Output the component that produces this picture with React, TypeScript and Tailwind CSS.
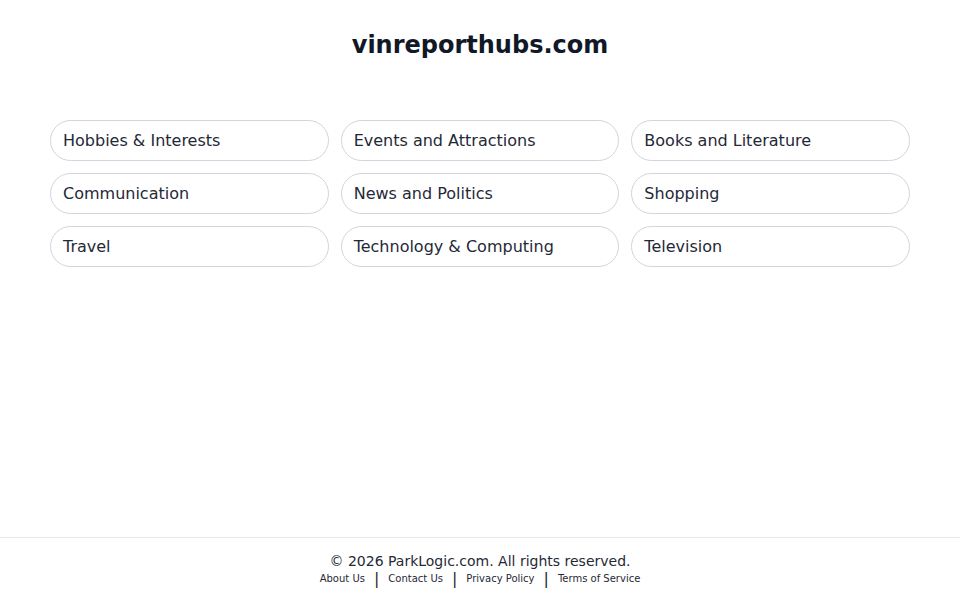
import React from "react";

const topics = [
  "Hobbies & Interests",
  "Events and Attractions",
  "Books and Literature",
  "Communication",
  "News and Politics",
  "Shopping",
  "Travel",
  "Technology & Computing",
  "Television",
];

const links = ["About Us", "Contact Us", "Privacy Policy", "Terms of Service"];

const App = () => {
  return (
    <div
      className="flex min-h-screen flex-col bg-white text-[#111827]"
      style={{ fontFamily: '"DejaVu Sans", sans-serif' }}
    >
      <main className="flex-1">
        <h1 className="pt-[30px] text-center text-[24px] font-bold leading-[30px]">
          vinreporthubs.com
        </h1>
        <div className="mx-[50px] mt-[60px] grid grid-cols-3 gap-x-3 gap-y-3">
          {topics.map((t) => (
            <a
              key={t}
              href="#"
              className="flex h-[41px] items-center rounded-full border border-[#d1d5db] px-3 text-[16px] text-[#1f2937]"
            >
              {t}
            </a>
          ))}
        </div>
      </main>
      <footer className="flex h-[63px] flex-col items-center border-t border-[#e5e7eb] pt-[14px] text-[#1f2937]">
        <p className="text-[14px] leading-[18px]">© 2026 ParkLogic.com. All rights reserved.</p>
        <div className="mt-[1px] flex items-center text-[10px] leading-[16px]">
          {links.map((l, i) => (
            <React.Fragment key={l}>
              {i > 0 && <span className="mx-[9px] text-[16px] leading-[16px]">|</span>}
              <a href="#">{l}</a>
            </React.Fragment>
          ))}
        </div>
      </footer>
    </div>
  );
};

export default App;
